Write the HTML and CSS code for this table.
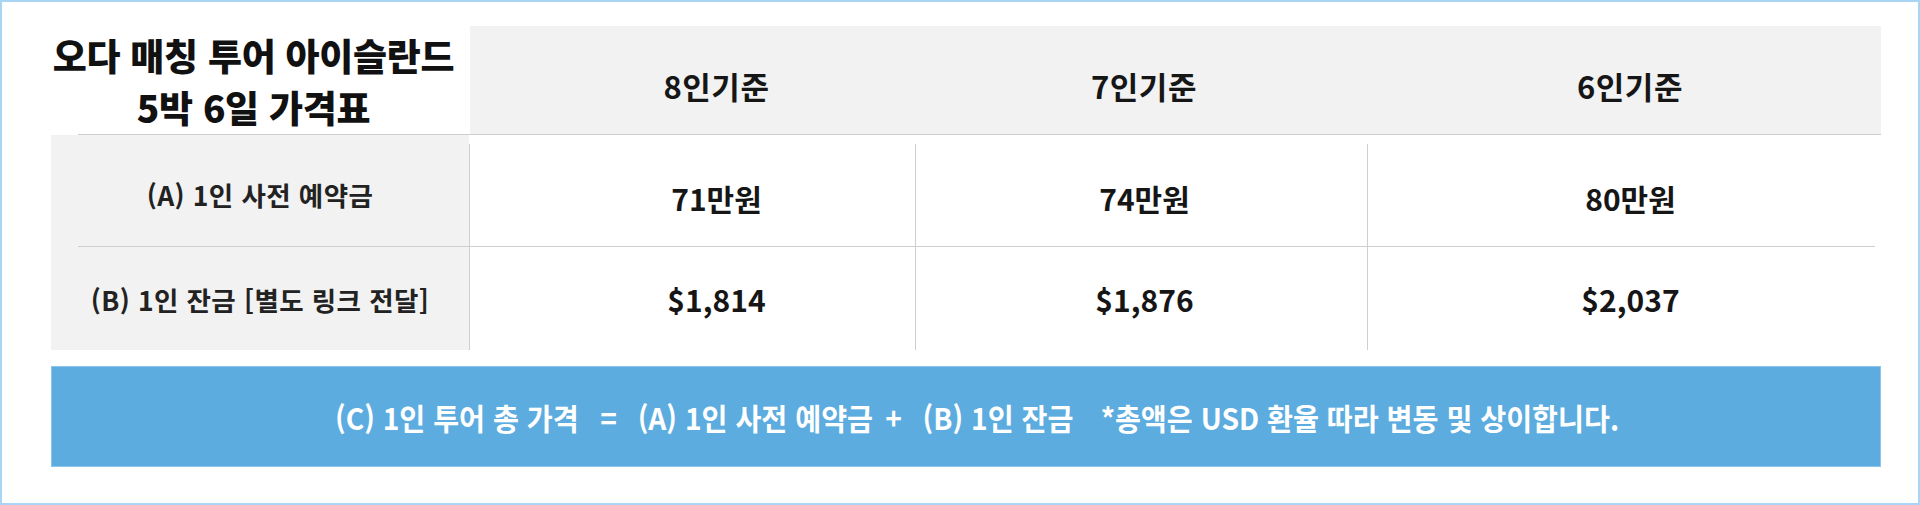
FILE: index.html
```html
<!DOCTYPE html>
<html lang="ko">
<head>
<meta charset="utf-8">
<title>오다 매칭 투어 아이슬란드 5박 6일 가격표</title>
<link rel="stylesheet" href="styles.css">
</head>
<body>
<div class="frame">
  <div class="table">
    <div class="head">
      <div class="title">오다 매칭 투어 아이슬란드<br>5박 6일 가격표</div>
      <div class="hcell c2">8인기준</div>
      <div class="hcell c3">7인기준</div>
      <div class="hcell c4">6인기준</div>
    </div>
    <div class="head-line"></div>
    <div class="body">
      <div class="label r1">(A) 1인 사전 예약금</div>
      <div class="val r1 c2">71만원</div>
      <div class="val r1 c3">74만원</div>
      <div class="val r1 c4">80만원</div>

      <div class="label-div"><div class="line"></div></div>
      <div class="div-cell"></div>
      <div class="div-cell"></div>
      <div class="div-cell last"></div>

      <div class="label r2">(B) 1인 잔금 [별도 링크 전달]</div>
      <div class="val r2 c2">$1,814</div>
      <div class="val r2 c3">$1,876</div>
      <div class="val r2 c4">$2,037</div>
    </div>
  </div>
  <div class="total">
    <span class="total-text"><span>(C) 1인 투어 총 가격</span><span class="op eq">=</span><span>(A) 1인 사전 예약금</span><span class="op plus">+</span><span>(B) 1인 잔금</span><span class="note">*총액은 USD 환율 따라 변동 및 상이합니다.</span></span>
  </div>
</div>
</body>
</html>
```

FILE: styles.css
```css
* { box-sizing: border-box; }
html, body { margin: 0; padding: 0; background: #ffffff; }
body {
  font-family: "Noto Sans CJK KR", "Noto Sans", sans-serif;
  color: #161616;
}
.frame {
  width: 1920px;
  height: 505px;
  border: 2px solid #a9d5f5;
  padding: 24px 37px 0 49px;
}
.table { width: 1830px; }
.head {
  display: grid;
  grid-template-columns: 419px 445px 452px 514px;
  height: 108px;
}
.title {
  background: #ffffff;
  font-size: 37px;
  font-weight: 900;
  line-height: 52px;
  letter-spacing: -0.3px;
  text-align: center;
  padding-right: 14px;
  padding-top: 2px;
  display: flex;
  align-items: center;
  justify-content: center;
  color: #111;
}
.hcell {
  background: #f2f2f2;
  font-size: 31px;
  font-weight: 700;
  letter-spacing: 0.5px;
  display: flex;
  align-items: center;
  justify-content: center;
  padding-top: 10px;
}
.c2 { padding-left: 48px; }
.c3 { padding-left: 6px; }
.c4 { padding-left: 12px; }
.head-line {
  height: 1px;
  background: #cfcfcf;
  margin-left: 27px;
}
.body {
  display: grid;
  grid-template-columns: 418px 446px 452px 514px;
  grid-template-rows: 111px 1px 103px;
}
.label {
  background: #f2f2f2;
  font-size: 26.5px;
  font-weight: 700;
  color: #222;
  display: flex;
  align-items: center;
  justify-content: center;
  letter-spacing: 0.4px;
}
.label.r1 { padding-top: 8px; }
.label.r2 { padding-top: 2px; }
.label-div { background: #f2f2f2; padding-left: 27px; }
.label-div .line { height: 1px; background: #cfcfcf; }
.div-cell { background: #cfcfcf; }
.div-cell.last { margin-right: 6px; }
.val {
  border-left: 1px solid #cfcfcf;
  font-size: 30px;
  font-weight: 700;
  display: flex;
  align-items: center;
  justify-content: center;
}
.val.r1 { margin-top: 9px; padding-top: 6px; }
.total {
  margin-top: 16px;
  width: 1830px;
  height: 101px;
  background: #5cacdf;
  border: 1px solid #8cc6ec;
  display: flex;
  align-items: center;
  justify-content: center;
  padding-left: 22px;
  color: #ffffff;
}
.total-text {
  font-size: 30px;
  font-weight: 700;
  white-space: nowrap;
  display: inline-block;
  transform: scaleX(0.94);
}
.op.eq { margin: 0 22px 0 23px; }
.op.plus { margin: 0 22px 0 13px; }
.note { margin-left: 29px; }
```
